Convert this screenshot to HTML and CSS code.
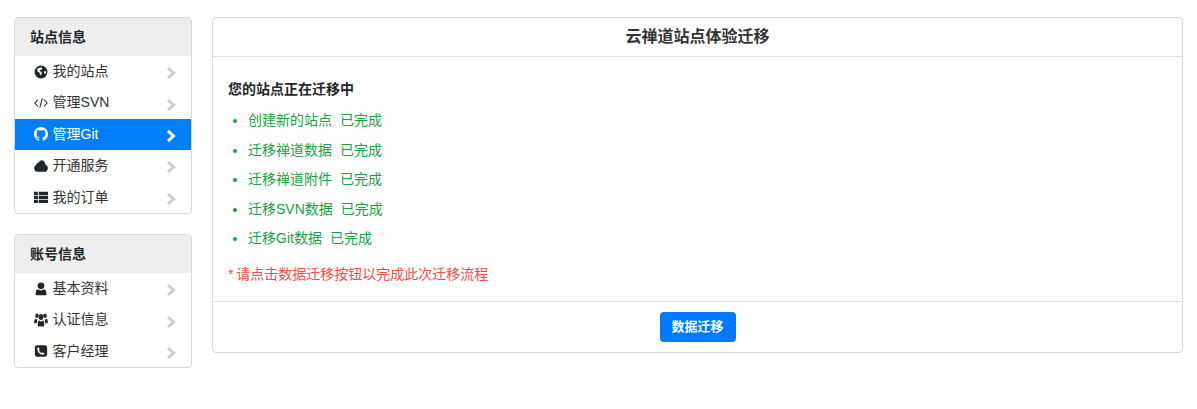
FILE: index.html
```html
<!DOCTYPE html>
<html lang="zh-CN">
<head>
    <meta charset="UTF-8">
    <meta name="viewport" content="width=device-width, initial-scale=1.0">
    <title>云禅道站点体验迁移</title>
    <link rel="stylesheet" href="styles.css">
</head>
<body>

<div class="page">
    <div class="sidebar">
        <div class="menu">
            <div class="menu-title">站点信息</div>
            <a class="menu-item" href="#">
                <svg class="icon" viewBox="0 0 16 16"><circle cx="8" cy="8" r="7.4" fill="currentColor"/><path d="M4.6 3.6 8 2.6l1.6 1.2-1 1.6-1.6.2-.4 1.4 1.6.6.8 1.6-1 2.4-1.2-.4-.4-2.4-2.2-1.4-.8-2zM11.4 7.4l1.8-.6 1 1.6-1.4 2.2-1-1.2z" fill="#fff"/></svg>
                <span class="menu-text">我的站点</span>
                <svg class="chevron" viewBox="0 0 10 14"><path d="M2 2l5.5 5L2 12" fill="none" stroke="currentColor" stroke-width="3"/></svg>
            </a>
            <a class="menu-item" href="#">
                <svg class="icon" viewBox="0 0 16 16"><path d="M4.6 4 1 8l3.6 4M11.4 4 15 8l-3.6 4M9.4 2.6 6.6 13.4" fill="none" stroke="currentColor" stroke-width="1.2"/></svg>
                <span class="menu-text">管理SVN</span>
                <svg class="chevron" viewBox="0 0 10 14"><path d="M2 2l5.5 5L2 12" fill="none" stroke="currentColor" stroke-width="3"/></svg>
            </a>
            <a class="menu-item active" href="#">
                <svg class="icon" viewBox="0 0 16 16"><path fill="currentColor" d="M8 0C3.58 0 0 3.58 0 8c0 3.54 2.29 6.53 5.47 7.59.4.07.55-.17.55-.38 0-.19-.01-.82-.01-1.49-2.01.37-2.53-.49-2.69-.94-.09-.23-.48-.94-.82-1.13-.28-.15-.68-.52-.01-.53.63-.01 1.08.58 1.23.82.72 1.21 1.87.87 2.33.66.07-.52.28-.87.51-1.07-1.78-.2-3.64-.89-3.64-3.95 0-.87.31-1.59.82-2.15-.08-.2-.36-1.02.08-2.12 0 0 .67-.21 2.2.82.64-.18 1.32-.27 2-.27.68 0 1.36.09 2 .27 1.53-1.04 2.2-.82 2.2-.82.44 1.1.16 1.92.08 2.12.51.56.82 1.27.82 2.15 0 3.07-1.87 3.75-3.65 3.95.29.25.54.73.54 1.48 0 1.07-.01 1.93-.01 2.2 0 .21.15.46.55.38A8.013 8.013 0 0016 8c0-4.42-3.58-8-8-8z"/></svg>
                <span class="menu-text">管理Git</span>
                <svg class="chevron" viewBox="0 0 10 14"><path d="M2 2l5.5 5L2 12" fill="none" stroke="currentColor" stroke-width="3"/></svg>
            </a>
            <a class="menu-item" href="#">
                <svg class="icon" viewBox="0 1.5 16 13" preserveAspectRatio="none"><path fill="currentColor" d="M3.6 13.4C1.6 13.4.2 12 .2 10.2c0-1.5 1-2.8 2.4-3.1C2.8 5.6 4 4.8 5.2 5c.7-1.4 2-2.3 3.6-2.3 2.2 0 4 1.7 4.1 3.9 1.6.3 2.9 1.7 2.9 3.4 0 1.9-1.6 3.4-3.600 3.400z"/></svg>
                <span class="menu-text">开通服务</span>
                <svg class="chevron" viewBox="0 0 10 14"><path d="M2 2l5.5 5L2 12" fill="none" stroke="currentColor" stroke-width="3"/></svg>
            </a>
            <a class="menu-item" href="#">
                <svg class="icon" viewBox="0 0 16 16"><path fill="currentColor" d="M0 2h4.4v3.6H0zM5.4 2H16v3.6H5.4zM0 6.600h4.4v3.6H0zM5.4 6.600H16v3.6H5.4zM0 11.200h4.4v3.6H0zM5.4 11.200H16v3.6H5.4z"/></svg>
                <span class="menu-text">我的订单</span>
                <svg class="chevron" viewBox="0 0 10 14"><path d="M2 2l5.5 5L2 12" fill="none" stroke="currentColor" stroke-width="3"/></svg>
            </a>
        </div>

        <div class="menu">
            <div class="menu-title">账号信息</div>
            <a class="menu-item" href="#">
                <svg class="icon" viewBox="0 0 16 16"><circle cx="8" cy="4.4" r="3.8" fill="currentColor"/><path fill="currentColor" d="M2.8 15c-.6 0-1-.4-1-1 0-3 .8-5.6 2.8-5.6.9.8 2.1 1.2 3.4 1.2s2.5-.4 3.400-1.200c2 0 2.800 2.600 2.800 5.600 0 .6-.4 1-1 1z"/></svg>
                <span class="menu-text">基本资料</span>
                <svg class="chevron" viewBox="0 0 10 14"><path d="M2 2l5.5 5L2 12" fill="none" stroke="currentColor" stroke-width="3"/></svg>
            </a>
            <a class="menu-item" href="#">
                <svg class="icon" viewBox="0 2 16 12.5" preserveAspectRatio="none"><g fill="currentColor"><circle cx="3.4" cy="4.4" r="2"/><circle cx="12.6" cy="4.4" r="2"/><circle cx="8" cy="5.6" r="2.6"/><path d="M.2 10.600c0-2 .6-3.400 1.600-3.400.6.5 1.200.8 2.200.7-.5.9-.7 2-.7 3.300H1.200c-.6 0-1-.2-1-.6zM15.800 10.600c0-2-.6-3.400-1.600-3.400-.6.5-1.200.8-2.200.7.5.9.7 2 .7 3.300h2.100c.6 0 1-.2 1-.6z"/><path d="M5.400 14c-.8 0-1.200-.5-1.200-1.200 0-2.400.7-4.200 1.700-4.200.6.6 1.300.9 2.100.9s1.500-.3 2.100-.9c1 0 1.700 1.800 1.700 4.200 0 .7-.4 1.200-1.200 1.200z"/></g></svg>
                <span class="menu-text">认证信息</span>
                <svg class="chevron" viewBox="0 0 10 14"><path d="M2 2l5.5 5L2 12" fill="none" stroke="currentColor" stroke-width="3"/></svg>
            </a>
            <a class="menu-item" href="#">
                <svg class="icon" viewBox="0 0 16 16"><rect x="1" y="1.5" width="14" height="13" rx="2.6" fill="currentColor"/><path fill="#fff" d="M5.200 3.800 6.600 6.400 5.700 7.300c.5 1.300 1.500 2.300 2.900 3l.9-.9 2.500 1.300c-.3 1.100-1.100 1.700-2.100 1.700-3.200-.3-6-3.200-6.200-6.600 0-1 .2-1.700 1-2z"/></svg>
                <span class="menu-text">客户经理</span>
                <svg class="chevron" viewBox="0 0 10 14"><path d="M2 2l5.5 5L2 12" fill="none" stroke="currentColor" stroke-width="3"/></svg>
            </a>
        </div>
    </div>

    <div class="panel">
        <div class="panel-title">云禅道站点体验迁移</div>
        <div class="panel-body">
            <p class="status-title">您的站点正在迁移中</p>
            <ul class="steps">
                <li>创建新的站点<span class="done">已完成</span></li>
                <li>迁移禅道数据<span class="done">已完成</span></li>
                <li>迁移禅道附件<span class="done">已完成</span></li>
                <li>迁移SVN数据<span class="done">已完成</span></li>
                <li>迁移Git数据<span class="done">已完成</span></li>
            </ul>
            <p class="notice">* 请点击数据迁移按钮以完成此次迁移流程</p>
        </div>
        <div class="panel-footer">
            <a class="btn" href="#">数据迁移</a>
        </div>
    </div>
</div>

</body>
</html>
```

FILE: styles.css
```css
body {
    margin: 0;
    background-color: #fff;
    color: #212529;
    font-family: "Liberation Sans", "Noto Sans CJK SC", sans-serif;
    font-size: 14px;
}
a {
    text-decoration: none;
    color: inherit;
}
.page {
    display: flex;
    align-items: flex-start;
    gap: 20px;
    padding: 17px 14px;
}
.sidebar {
    width: 178px;
    flex-shrink: 0;
    display: flex;
    flex-direction: column;
    gap: 20px;
}
.menu {
    border: 1px solid #d8d8d8;
    border-radius: 4px;
    overflow: hidden;
}
.menu-title {
    height: 38px;
    line-height: 38px;
    padding-left: 15px;
    background: #eee;
    font-weight: bold;
}
.menu-item {
    display: flex;
    align-items: center;
    height: 31.4px;
    padding: 0 15px 0 19px;
    color: #333;
}
.menu-item.active {
    background: #007ff7;
    color: #fff;
}
.icon {
    width: 14px;
    height: 14px;
    margin-right: 4.6px;
    flex-shrink: 0;
    color: #212529;
}
.active .icon {
    color: #fff;
}
.menu-text {
    flex: 1;
    position: relative;
    top: -1.6px;
}
.chevron {
    width: 10px;
    height: 14px;
    margin-top: 3px;
    color: #ccc;
}
.active .chevron {
    color: #fff;
}
.panel {
    flex: 1;
    border: 1px solid #d8d8d8;
    border-radius: 4px;
}
.panel-title {
    height: 38px;
    line-height: 38px;
    text-align: center;
    font-size: 16px;
    font-weight: bold;
    color: #333;
    border-bottom: 1px solid #ddd;
}
.panel-body {
    padding: 22px 15px 16px;
}
.status-title {
    margin: 0 0 9px;
    line-height: 21px;
    font-weight: bold;
}
.steps {
    margin: 0 0 7px;
    padding-left: 20px;
    color: #17a13f;
}
.steps li {
    height: 29.5px;
    line-height: 21px;
    padding-top: 1px;
    box-sizing: border-box;
}
.done {
    margin-left: 8px;
}
.notice {
    margin: 0;
    line-height: 21px;
    color: #ff4a3d;
    word-spacing: -1px;
}
.panel-footer {
    display: flex;
    justify-content: center;
    padding: 10px 0;
    border-top: 1px solid #ddd;
}
.btn {
    width: 76px;
    height: 30px;
    line-height: 30px;
    text-align: center;
    font-size: 13px;
    font-weight: bold;
    color: #fff;
    background: #007bff;
    border-radius: 4px;
}
```
